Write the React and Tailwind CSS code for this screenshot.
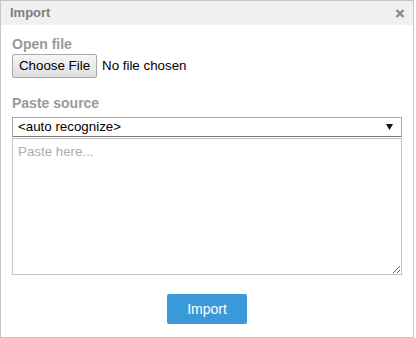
import { useState } from "react";

const font = { fontFamily: '"Liberation Sans", Arial, sans-serif' };

const CloseIcon = () => (
  <svg width="10" height="9" viewBox="0 0 10 9">
    <path d="M1.5 1 L8.5 8 M8.5 1 L1.5 8" stroke="#8a8a8a" strokeWidth="2.4" strokeLinecap="butt" />
  </svg>
);

const App = () => {
  const [text, setText] = useState("");
  return (
    <div className="bg-white w-[416px] h-[338px]" style={font}>
      <div className="w-[414px] h-[338px] border border-[#c6c6c6] flex flex-col">
        <div className="h-[24px] bg-[#f0f0f0] flex items-center justify-between pl-[9px] pr-[8px]">
          <span className="text-[13px] font-bold text-[#7f7f7f]">Import</span>
          <button className="flex items-center">
            <CloseIcon />
          </button>
        </div>

        <div className="flex flex-col px-[11px] pt-[9px]">
          <div className="text-[14px] leading-[20px] font-bold text-[#9a9a9a]">Open file</div>
          <div className="flex items-center mt-[-1px] h-[25px]">
            <button className="h-[24px] w-[85px] border border-[#a9a9a9] rounded-[2px] bg-gradient-to-b from-[#f6f6f6] to-[#dedede] text-[13.33px] text-black">
              Choose File
            </button>
            <span className="ml-[5px] text-[13.33px] text-black">No file chosen</span>
          </div>

          <div className="mt-[15px] text-[14px] leading-[20px] font-bold text-[#9a9a9a]">Paste source</div>
          <div className="mt-[4px] h-[20px] border border-[#a9a9a9] border-b-[#7a7a7a] flex items-center justify-between pl-[5px] pr-[8px]">
            <span className="text-[13.33px] text-black leading-none">&lt;auto recognize&gt;</span>
            <svg width="7" height="6" viewBox="0 0 7 6">
              <path d="M0 0 H7 L3.5 6 Z" fill="#111" />
            </svg>
          </div>
          <textarea
            value={text}
            onChange={(e) => setText(e.target.value)}
            placeholder="Paste here..."
            className="mt-[1px] h-[137px] border border-[#c4c4c4] px-[5px] py-[3px] text-[13.33px] text-black placeholder:text-[#acacac] outline-none resize"
          />
        </div>

        <div className="flex justify-center mt-[19px]">
          <button className="w-[80px] h-[30px] bg-[#3a9ad9] rounded-[2px] text-white text-[14px]">Import</button>
        </div>
      </div>
    </div>
  );
};

export default App;
